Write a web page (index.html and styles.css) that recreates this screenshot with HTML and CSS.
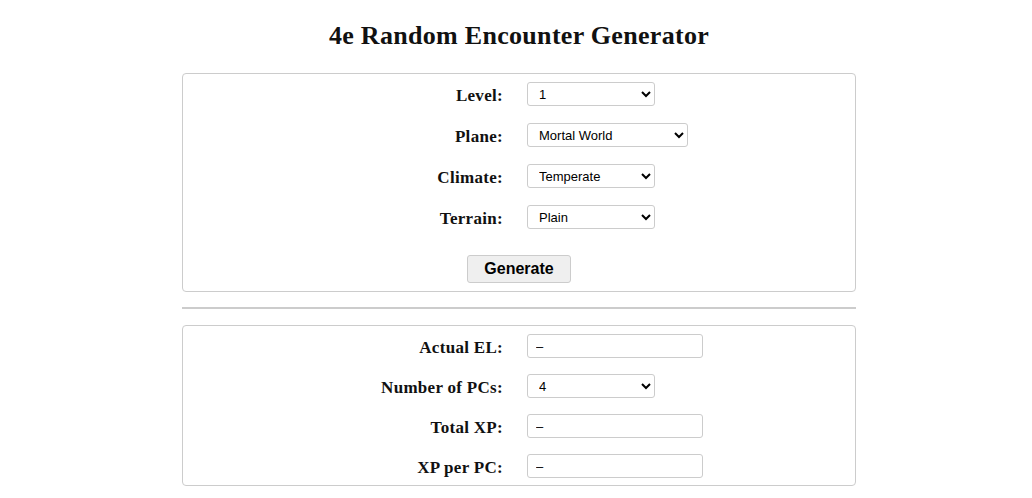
FILE: index.html
```html
<!DOCTYPE html>
<html lang="en">
<head>
    <meta charset="UTF-8">
    <meta name="viewport" content="width=device-width, initial-scale=1.0">
    <title>4e Random Encounter Generator</title>
    <link rel="stylesheet" href="styles.css">
</head>
<body>
    <div class="page">
        <h1 class="title">4e Random Encounter Generator</h1>

        <form class="panel">
            <div class="rows">
                <label class="label" for="level">Level:</label>
                <div class="field">
                    <select id="level" class="control">
                        <option>1</option>
                        <option>2</option>
                        <option>3</option>
                    </select>
                </div>

                <label class="label" for="plane">Plane:</label>
                <div class="field">
                    <select id="plane" class="control wide">
                        <option>Mortal World</option>
                        <option>Feywild</option>
                        <option>Shadowfell</option>
                    </select>
                </div>

                <label class="label" for="climate">Climate:</label>
                <div class="field">
                    <select id="climate" class="control">
                        <option>Temperate</option>
                        <option>Cold</option>
                        <option>Warm</option>
                    </select>
                </div>

                <label class="label" for="terrain">Terrain:</label>
                <div class="field">
                    <select id="terrain" class="control">
                        <option>Plain</option>
                        <option>Forest</option>
                        <option>Hills</option>
                    </select>
                </div>
            </div>
            <div class="actions">
                <button type="button" class="btn">Generate</button>
            </div>
        </form>

        <div class="divider"></div>

        <div class="panel results">
            <div class="rows tight">
                <label class="label" for="el">Actual EL:</label>
                <div class="field"><input id="el" class="control text" type="text" value="–" readonly></div>

                <label class="label" for="pcs">Number of PCs:</label>
                <div class="field">
                    <select id="pcs" class="control">
                        <option>3</option>
                        <option selected>4</option>
                        <option>5</option>
                    </select>
                </div>

                <label class="label" for="total">Total XP:</label>
                <div class="field"><input id="total" class="control text" type="text" value="–" readonly></div>

                <label class="label" for="per">XP per PC:</label>
                <div class="field"><input id="per" class="control text" type="text" value="–" readonly></div>
            </div>
        </div>
    </div>
</body>
</html>
```

FILE: styles.css
```css
* {
    margin: 0;
    padding: 0;
    box-sizing: border-box;
}
body {
    font-family: "Liberation Serif", "Times New Roman", serif;
    color: #111;
    background: #fff;
    padding-left: 6px;
}
.page {
    width: 674px;
    margin: 0 auto;
}
.title {
    text-align: center;
    font-size: 26px;
    font-weight: bold;
    letter-spacing: 0.3px;
    line-height: 32px;
    padding: 20px 0 21px;
}
.panel {
    border: 1px solid #ccc;
    border-radius: 4px;
    padding: 8px 8px 8px 0;
}
.results {
    padding-bottom: 7px;
}
.rows {
    display: grid;
    grid-template-columns: 1fr 1fr;
    column-gap: 24px;
    row-gap: 17px;
    align-items: center;
}
.rows.tight {
    row-gap: 16px;
}
.label {
    text-align: right;
    font-size: 17px;
    font-weight: bold;
    letter-spacing: 0.3px;
    line-height: 20px;
    padding-top: 4px;
}
.field {
    display: flex;
}
.control {
    height: 24px;
    width: 128px;
    border: 1px solid #ccc;
    border-radius: 3px;
    background: #fff;
    color: #000;
    font-family: "Liberation Sans", Arial, sans-serif;
    font-size: 13px;
    padding: 0 4px 0 7px;
}
.control.wide {
    width: 161px;
}
.control.text {
    width: 176px;
    padding-left: 8px;
}
.actions {
    display: flex;
    justify-content: center;
    padding: 26px 0 0 8px;
}
.btn {
    width: 104px;
    height: 28px;
    border: 1px solid #ccc;
    border-radius: 3px;
    background: #efefef;
    font-family: "Liberation Sans", Arial, sans-serif;
    font-size: 16px;
    font-weight: bold;
    color: #000;
}
.divider {
    height: 2px;
    background: #ccc;
    margin: 15px 0 16px;
}
```
